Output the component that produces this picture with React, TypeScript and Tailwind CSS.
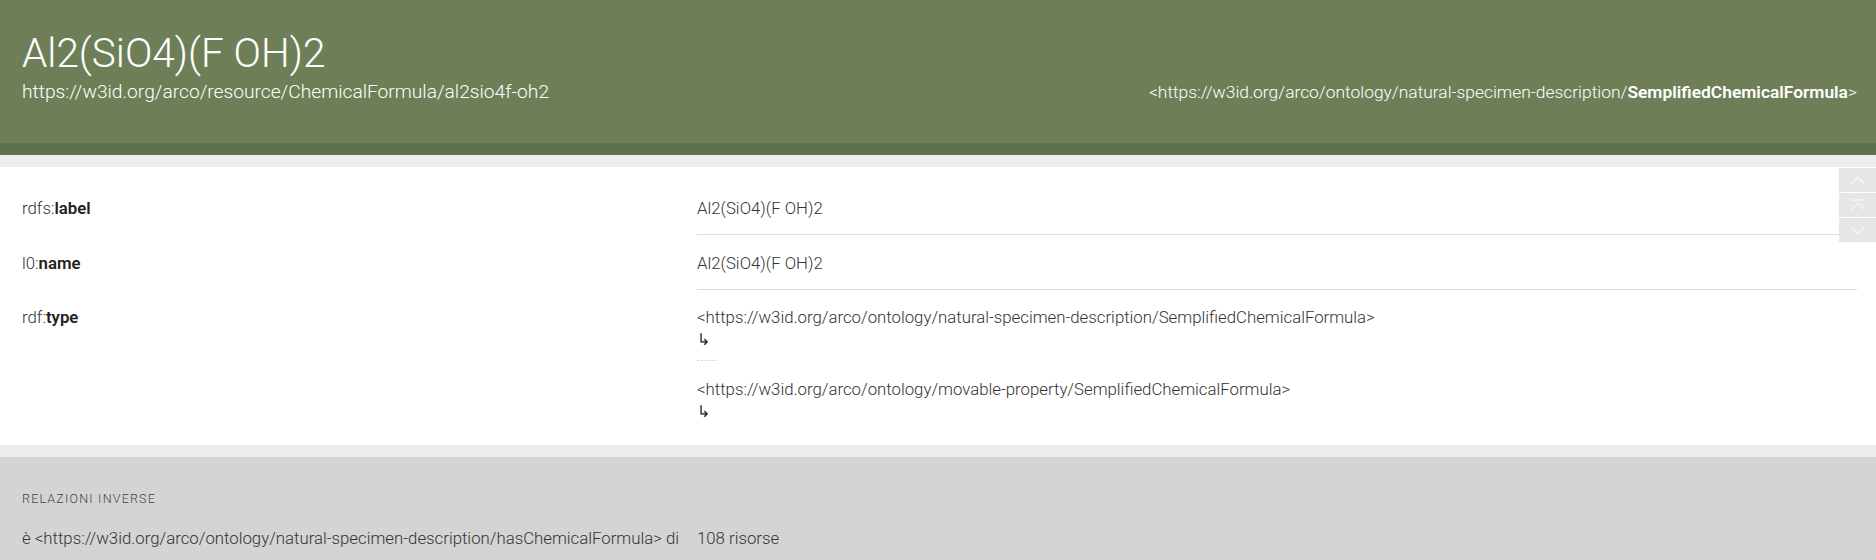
const FONT = "font-['Roboto','Liberation_Sans',sans-serif]";

const TYPES = [
  "<https://w3id.org/arco/ontology/natural-specimen-description/SemplifiedChemicalFormula>",
  "<https://w3id.org/arco/ontology/movable-property/SemplifiedChemicalFormula>",
];

function Row({ prefix, name, children, last = false }: { prefix: string; name: string; children: React.ReactNode; last?: boolean }) {
  return (
    <div className="flex">
      <div className={"w-[697px] shrink-0 pl-[22px] text-[16.8px] leading-6 font-light text-[#333] " + (last ? "pt-[15px]" : "pt-4")}>
        {prefix}
        <span className="font-semibold text-[#222]">{name}</span>
      </div>
      <div className={"flex-1 " + (last ? "" : "border-b border-[#dcdcdc]")}>{children}</div>
    </div>
  );
}

function ScrollButtons() {
  return (
    <div className="absolute right-0 top-[168px] flex flex-col gap-px">
      <div className="w-[37px] h-6 bg-[#e6e6e6] flex items-center justify-center">
        <svg width="16" height="9" viewBox="0 0 16 9" fill="none" stroke="#f7f7f7" strokeWidth="1.2">
          <path d="M1 8 L8 1 L15 8" />
        </svg>
      </div>
      <div className="w-[37px] h-6 bg-[#e6e6e6] flex items-center justify-center">
        <svg width="16" height="12" viewBox="0 0 16 12" fill="none" stroke="#f7f7f7" strokeWidth="1.2">
          <path d="M1 1 H15" />
          <path d="M1 11 L8 4 L15 11" />
        </svg>
      </div>
      <div className="w-[37px] h-6 bg-[#e6e6e6] flex items-center justify-center">
        <svg width="16" height="9" viewBox="0 0 16 9" fill="none" stroke="#f7f7f7" strokeWidth="1.2">
          <path d="M1 1 L8 8 L15 1" />
        </svg>
      </div>
    </div>
  );
}

export default function App() {
  return (
    <div className={`relative w-[1876px] h-[560px] overflow-hidden bg-white ${FONT}`}>
      {/* header */}
      <header className="bg-[#6e7f58] text-white pt-[29px] pb-[39px] pl-[22px] pr-[19px]">
        <h1 className="text-[40.5px] leading-[48px] font-light">Al2(SiO4)(F OH)2</h1>
        <div className="mt-[3px] flex items-baseline justify-between">
          <span className="text-[19.2px] leading-6 font-light">https://w3id.org/arco/resource/ChemicalFormula/al2sio4f-oh2</span>
          <span className="text-[17.4px] leading-6 font-light">
            &lt;https://w3id.org/arco/ontology/natural-specimen-description/
            <span className="font-semibold">SemplifiedChemicalFormula</span>&gt;
          </span>
        </div>
      </header>
      <div className="h-3 bg-[#5f714c]" />
      <div className="h-3 bg-[#ececec]" />

      {/* properties */}
      <section className="pt-[13px] pr-[19px]">
        <Row prefix="rdfs:" name="label">
          <div className="pt-4 pb-3.5 text-[16.8px] leading-6 font-light text-[#333]">Al2(SiO4)(F OH)2</div>
        </Row>
        <Row prefix="l0:" name="name">
          <div className="pt-4 pb-3.5 text-[16.8px] leading-6 font-light text-[#333]">Al2(SiO4)(F OH)2</div>
        </Row>
        <Row prefix="rdf:" name="type" last>
          <div className="pt-[15px] pb-[22px] text-[16.8px] font-light text-[#333]">
            {TYPES.map((t, i) => (
              <div key={t}>
                {i > 0 && <div className="mt-[9px] mb-4 w-5 border-t border-dotted border-[#cfcfcf]" />}
                <div className="leading-6">{t}</div>
                <div className="leading-[22px] text-[16px] font-normal text-[#222]">↳</div>
              </div>
            ))}
          </div>
        </Row>
      </section>

      {/* inverse relations */}
      <div className="h-3 bg-[#ececec]" />
      <section className="bg-[#d4d4d4] h-[200px] pt-[34px] px-[22px]">
        <div className="text-[12.5px] leading-4 tracking-[1.2px] font-light text-[#444]">RELAZIONI INVERSE</div>
        <div className="mt-[19px] flex text-[16.8px] leading-6 font-light text-[#333]">
          <span className="w-[675px] shrink-0">
            è &lt;https://w3id.org/arco/ontology/natural-specimen-description/hasChemicalFormula&gt; di
          </span>
          <span>108 risorse</span>
        </div>
      </section>

      <ScrollButtons />
    </div>
  );
}
